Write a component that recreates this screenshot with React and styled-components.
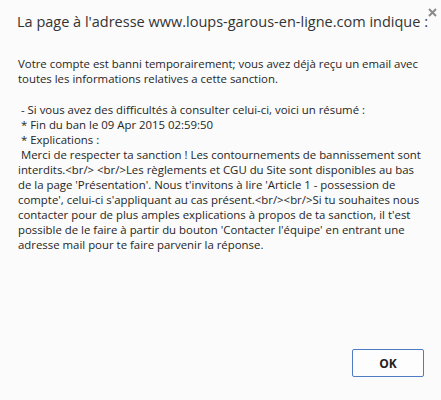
import React from 'react'
import styled, { createGlobalStyle } from 'styled-components'

const GlobalStyle = createGlobalStyle`
    html, body {
        margin: 0;
        padding: 0;
        background: #fbfbfb;
    }
`

const Dialog = styled.div`
    position: relative;
    width: 441px;
    height: 400px;
    box-sizing: border-box;
    background: #fbfbfb;
    font-family: "Open Sans", "Noto Sans", sans-serif;
    color: #333;
    display: flex;
    flex-direction: column;
    padding: 11px 17px 0 18px;
`

const Title = styled.div`
    font-size: 14.5px;
    line-height: 22px;
    color: #333;
    white-space: nowrap;
    margin-left: -1px;
`

const Close = styled.button`
    position: absolute;
    top: 5px;
    right: 2px;
    width: 14px;
    height: 14px;
    padding: 0;
    border: none;
    background: none;
    display: flex;
    align-items: center;
    justify-content: center;
`

const Message = styled.div`
    margin-top: 23px;
    font-size: 11.4px;
    line-height: 15px;
    color: #262626;
`

const Line = styled.div`
    white-space: pre;
    height: ${props => props.blank ? '16px' : '15px'};
`

const Footer = styled.div`
    margin-top: auto;
    display: flex;
    justify-content: flex-end;
    padding: 0 0 23px 0;
`

const OkButton = styled.button`
    width: 72px;
    height: 28px;
    background: #fdfdfd;
    border: 1px solid #4d7bc4;
    border-radius: 2px;
    font-family: "Open Sans", "Noto Sans", sans-serif;
    font-weight: 700;
    font-size: 12px;
    color: #222;
`

const lines = [
    'Votre compte est banni temporairement; vous avez déjà reçu un email avec',
    'toutes les informations relatives a cette sanction.',
    '',
    ' - Si vous avez des difficultés à consulter celui-ci, voici un résumé :',
    ' * Fin du ban le 09 Apr 2015 02:59:50',
    ' * Explications :',
    ' Merci de respecter ta sanction ! Les contournements de bannissement sont',
    'interdits.<br/> <br/>Les règlements et CGU du Site sont disponibles au bas',
    "de la page 'Présentation'. Nous t'invitons à lire 'Article 1 - possession de",
    "compte', celui-ci s'appliquant au cas présent.<br/><br/>Si tu souhaites nous",
    "contacter pour de plus amples explications à propos de ta sanction, il t'est",
    "possible de le faire à partir du bouton 'Contacter l'équipe' en entrant une",
    'adresse mail pour te faire parvenir la réponse.',
]

function App() {
    return (
        <>
            <GlobalStyle />
            <Dialog>
                <Title>La page à l'adresse www.loups-garous-en-ligne.com indique :</Title>
                <Close aria-label="Fermer">
                    <svg width="9" height="9" viewBox="0 0 9 9">
                        <path d="M1 1 L8 8 M8 1 L1 8" stroke="#8a8a8a" strokeWidth="2" />
                    </svg>
                </Close>

                <Message>
                    {lines.map((text, i) => (
                        <Line key={i} blank={text === ''}>{text}</Line>
                    ))}
                </Message>

                <Footer>
                    <OkButton>OK</OkButton>
                </Footer>
            </Dialog>
        </>
    )
}

export default App
